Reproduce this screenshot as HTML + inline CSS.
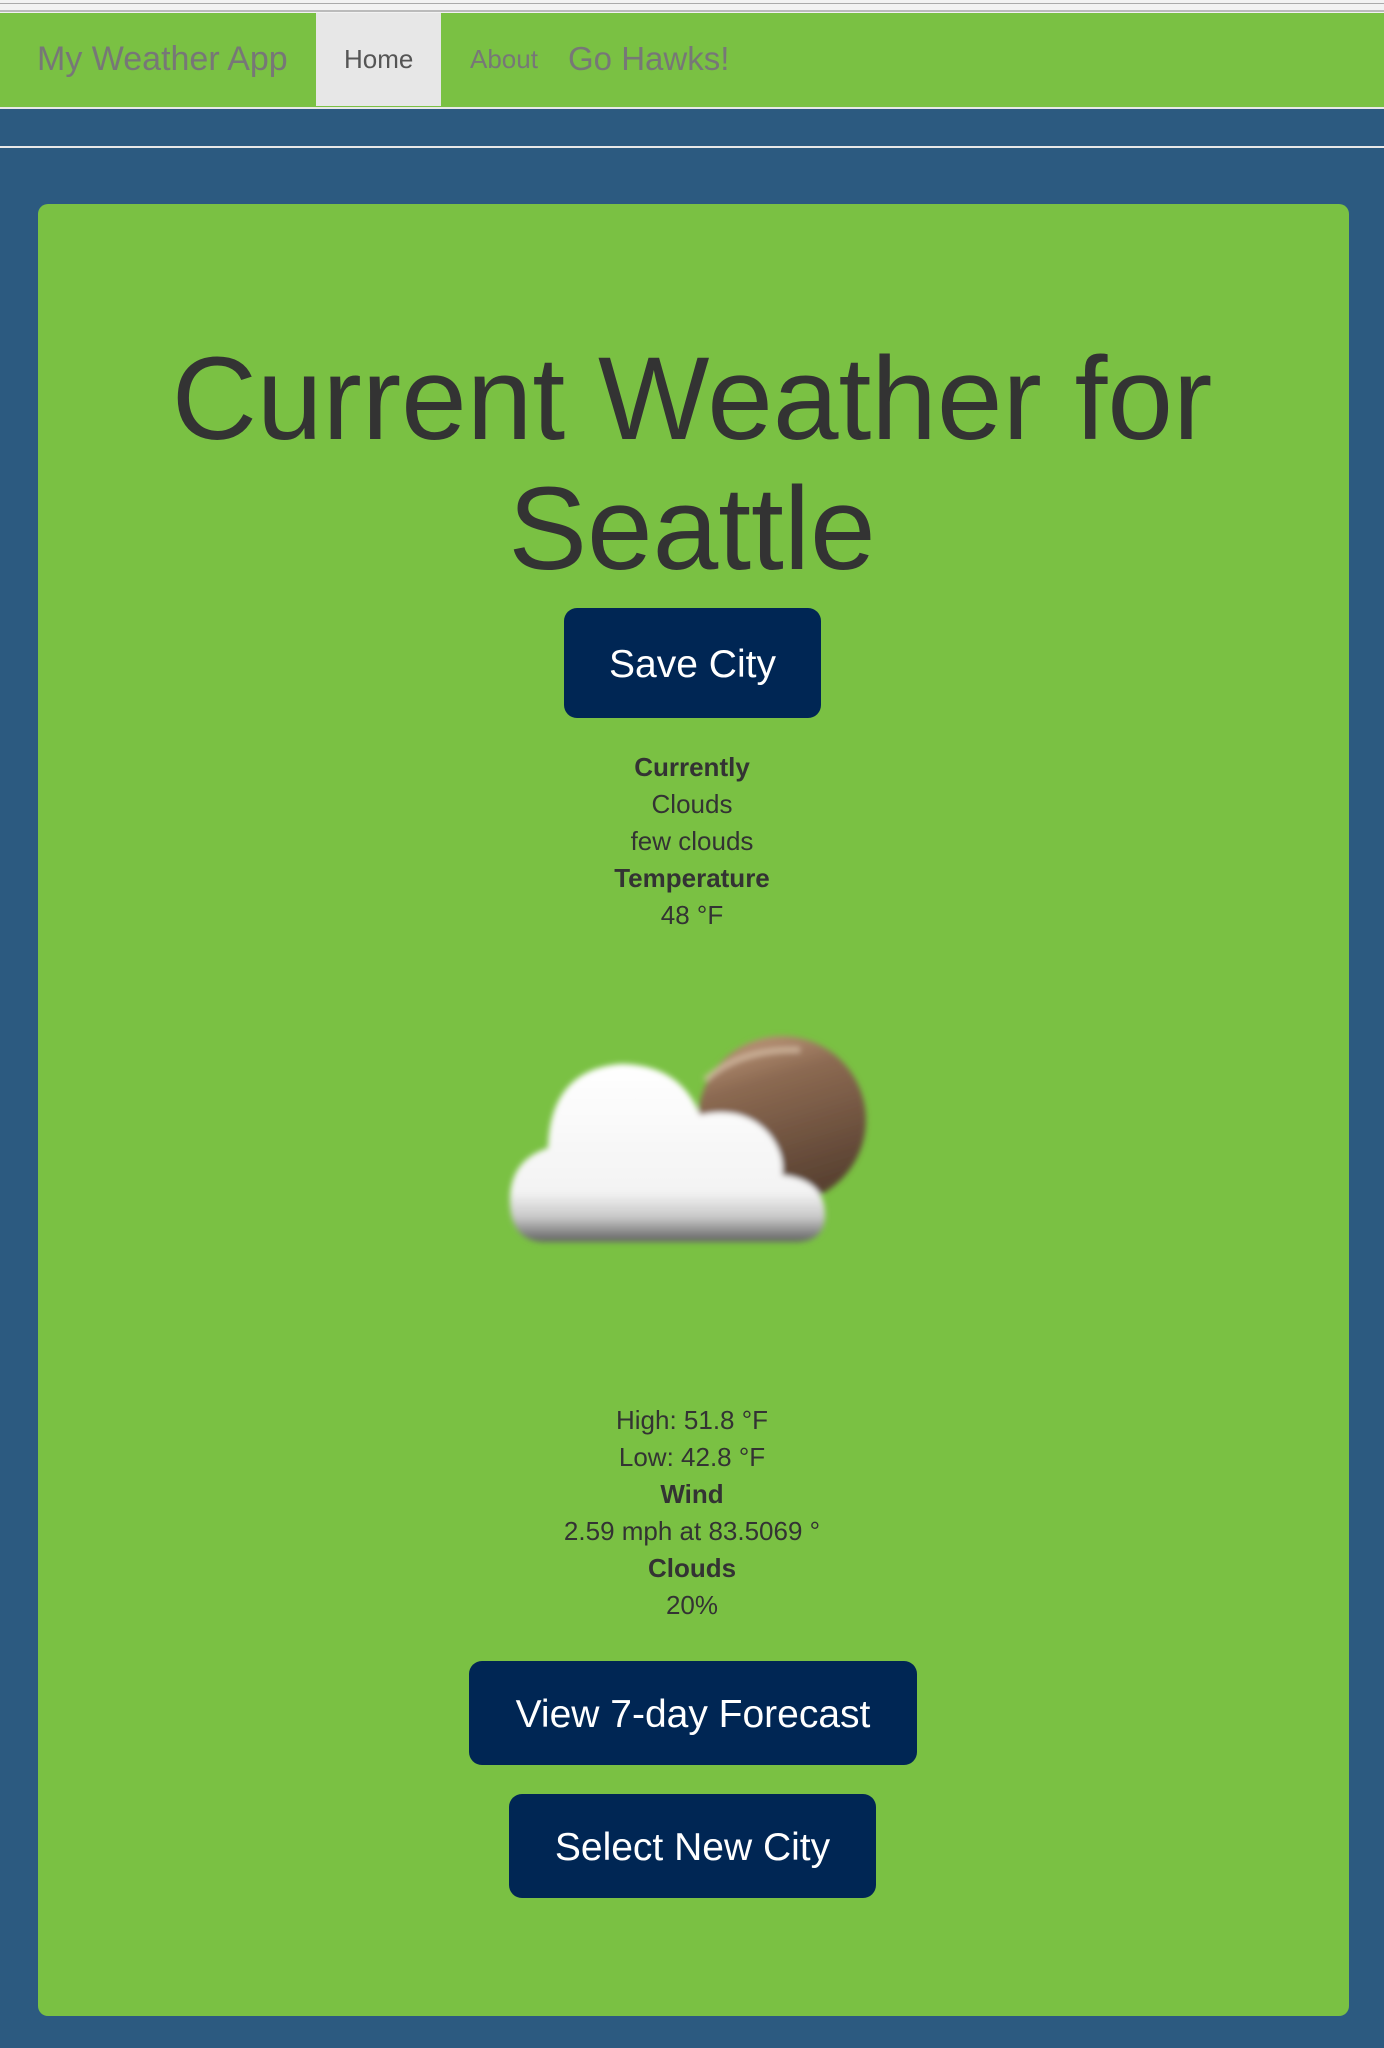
<!DOCTYPE html>
<html><head><meta charset="utf-8"><style>
*{margin:0;padding:0;box-sizing:border-box}
body{width:1384px;height:2048px;background:#2c5a80;font-family:"Liberation Sans",Arial,sans-serif;position:relative;overflow:hidden;color:#333}
.abs{position:absolute}
.top{left:0;top:0;width:1384px;height:13px;background:#f2f2f2}
.l1{left:0;top:3px;width:1384px;height:1px;background:#aaa}
.l2{left:0;top:10px;width:1384px;height:2px;background:#bbb}
.nav{left:0;top:13px;width:1384px;height:94px;background:#7ac143}
.w1{left:0;top:107px;width:1384px;height:2px;background:#e8e8e8}
.w2{left:0;top:146px;width:1384px;height:2px;background:#e8e8e8}
.home{left:316px;top:13px;width:125px;height:93px;background:#e7e7e7}
.nt{white-space:nowrap;color:#777;line-height:1}
.card{left:38px;top:204px;width:1311px;height:1812px;background:#7ac143;border-radius:10px}
.h{left:0;width:1384px;text-align:center;font-size:118px;color:#333;line-height:130px}
.btn{background:#002654;color:#fff;border-radius:13px;text-align:center;font-size:39px}
.t{left:0;width:1384px;text-align:center;font-size:26px;line-height:37px;color:#333}
b{font-weight:bold}
</style></head><body>
<div class="abs top"></div><div class="abs l1"></div><div class="abs l2"></div>
<div class="abs nav"></div>
<div class="abs home"></div>
<div class="abs w1"></div><div class="abs w2"></div>
<div class="abs nt" style="left:37px;top:42px;font-size:34px">My Weather App</div>
<div class="abs nt" style="left:344px;top:46px;font-size:26px;color:#555">Home</div>
<div class="abs nt" style="left:470px;top:46px;font-size:26px">About</div>
<div class="abs nt" style="left:568px;top:42px;font-size:33px">Go Hawks!</div>
<div class="abs card"></div>
<div class="abs h" style="top:334px">Current Weather for</div>
<div class="abs h" style="top:464px">Seattle</div>
<div class="abs btn" style="left:564px;top:608px;width:257px;height:110px;line-height:114px">Save City</div>
<div class="abs t" style="top:749px"><b>Currently</b><br>Clouds<br>few clouds<br><b>Temperature</b><br>48 °F</div>
<svg class="abs" style="left:500px;top:1020px" width="380" height="240" viewBox="0 0 380 240">
<defs>
<filter id="b"><feGaussianBlur stdDeviation="3"/></filter>
<linearGradient id="m" x1="0" y1="0" x2="0.3" y2="1"><stop offset="0" stop-color="#c9a283"/><stop offset="0.35" stop-color="#8c6a52"/><stop offset="1" stop-color="#5a4232"/></linearGradient>
<linearGradient id="c" x1="0" y1="0" x2="0" y2="1"><stop offset="0" stop-color="#fff"/><stop offset="0.72" stop-color="#f3f3f3"/><stop offset="0.86" stop-color="#c8c8c8"/><stop offset="1" stop-color="#606060"/></linearGradient>
</defs>
<g filter="url(#b)">
<circle cx="282" cy="100" r="84" fill="url(#m)"/>
<path d="M205 60 Q240 28 300 30" stroke="#d9c2aa" stroke-width="6" fill="none" opacity="0.7"/>
<path d="M45 222 Q10 222 10 180 Q10 140 48 128 Q50 50 120 44 Q180 44 200 95 Q245 85 270 115 Q285 135 282 155 Q325 160 325 195 Q325 222 295 222 Z" fill="url(#c)"/>
</g>
</svg>
<div class="abs t" style="top:1402px">High: 51.8 °F<br>Low: 42.8 °F<br><b>Wind</b><br>2.59 mph at 83.5069 °<br><b>Clouds</b><br>20%</div>
<div class="abs btn" style="left:469px;top:1661px;width:448px;height:104px;line-height:108px">View 7-day Forecast</div>
<div class="abs btn" style="left:509px;top:1794px;width:367px;height:104px;line-height:108px">Select New City</div>
</body></html>
